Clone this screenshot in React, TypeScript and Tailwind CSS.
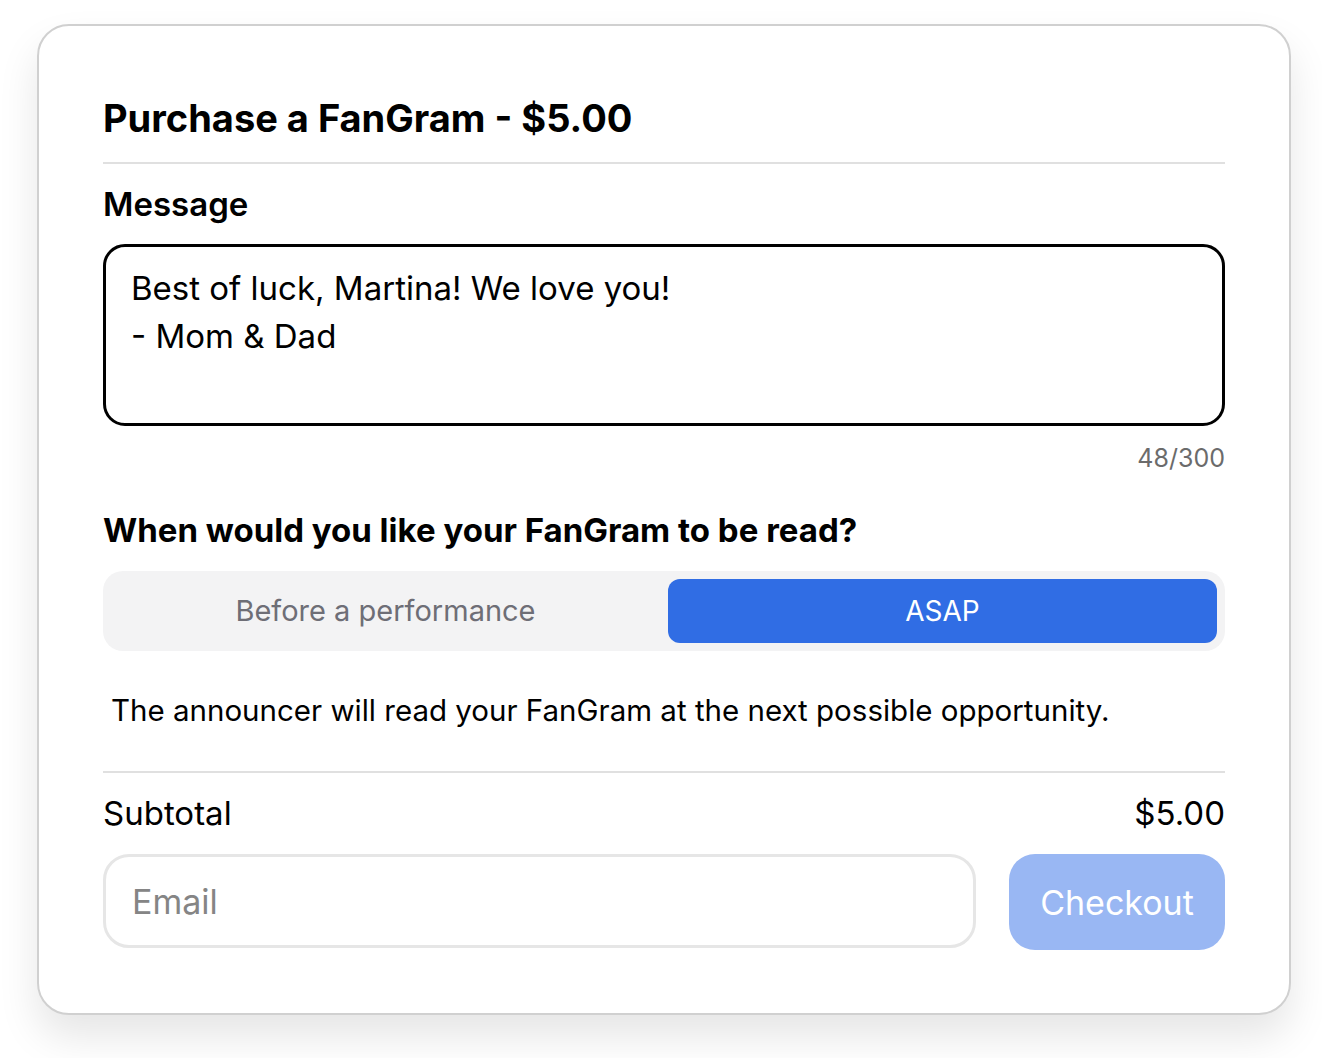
import { useState } from "react"

const MAX = 300

export default function App() {
  const [message, setMessage] = useState(
    "Best of luck, Martina! We love you!\n- Mom & Dad"
  )
  const [when, setWhen] = useState<"before" | "asap">("asap")
  const [email, setEmail] = useState("")

  // line breaks count as two characters, same as the server does
  const count = message.replace(/\n/g, "\r\n").length

  return (
    <div
      className="min-h-screen bg-white pt-[24px] pr-[31px] pb-[44px] pl-[37px]"
      style={{ fontFamily: "Inter, 'Noto Sans', sans-serif" }}
    >
      <div className="flex flex-col rounded-[32px] border-2 border-[#d0d0d0] bg-white px-[64px] pt-[70px] pb-[63px] shadow-[0_22px_40px_rgba(0,0,0,0.10)]">
        <h1 className="text-[38px] leading-[44px] font-bold text-black">
          Purchase a FanGram - $5.00
        </h1>
        <div className="mt-[22px] h-[2px] bg-[#e0e0e0]" />

        <h2 className="mt-[22px] text-[33px] leading-[36px] font-semibold text-black">
          Message
        </h2>
        <textarea
          value={message}
          onChange={(e) => setMessage(e.target.value.slice(0, MAX))}
          className="mt-[22px] h-[182px] resize-none rounded-[22px] border-[3px] border-black px-[25px] pt-[17px] text-[33px] leading-[48px] text-black outline-none"
        />
        <div className="mt-[16px] self-end text-[25px] leading-[32px] text-[#6b6b6b]">
          {count}/{MAX}
        </div>

        <h2 className="mt-[36px] text-[33px] leading-[40px] font-bold text-black">
          When would you like your FanGram to be read?
        </h2>
        <div className="mt-[21px] grid grid-cols-2 gap-[8px] rounded-[20px] bg-[#f3f3f4] p-[8px]">
          <button
            onClick={() => setWhen("before")}
            className={
              when === "before"
                ? "h-[64px] rounded-[12px] bg-[#306de4] text-[29px] text-white"
                : "h-[64px] rounded-[12px] text-[29px] text-[#6e6e76]"
            }
          >
            Before a performance
          </button>
          <button
            onClick={() => setWhen("asap")}
            className={
              when === "asap"
                ? "h-[64px] rounded-[12px] bg-[#306de4] text-[28px] text-white"
                : "h-[64px] rounded-[12px] text-[28px] text-[#6e6e76]"
            }
          >
            ASAP
          </button>
        </div>
        <p className="mt-[40px] pl-[8px] text-[29.5px] leading-[38px] text-black">
          {when === "asap"
            ? "The announcer will read your FanGram at the next possible opportunity."
            : "The announcer will read your FanGram before the next performance."}
        </p>

        <div className="mt-[42px] h-[2px] bg-[#e0e0e0]" />
        <div className="mt-[20px] flex items-center justify-between text-[33px] leading-[40px] text-black">
          <span>Subtotal</span>
          <span>$5.00</span>
        </div>
        <div className="mt-[21px] flex items-start gap-[33px]">
          <input
            value={email}
            onChange={(e) => setEmail(e.target.value)}
            placeholder="Email"
            className="h-[94px] flex-1 rounded-[26px] border-[3px] border-[#e6e6e6] px-[26px] text-[34px] text-black outline-none placeholder:text-[#858585]"
          />
          <button
            disabled={!email}
            className="h-[96px] w-[216px] rounded-[26px] bg-[#306de4] text-[34px] text-white disabled:bg-[#99b7f3]"
          >
            Checkout
          </button>
        </div>
      </div>
    </div>
  )
}
